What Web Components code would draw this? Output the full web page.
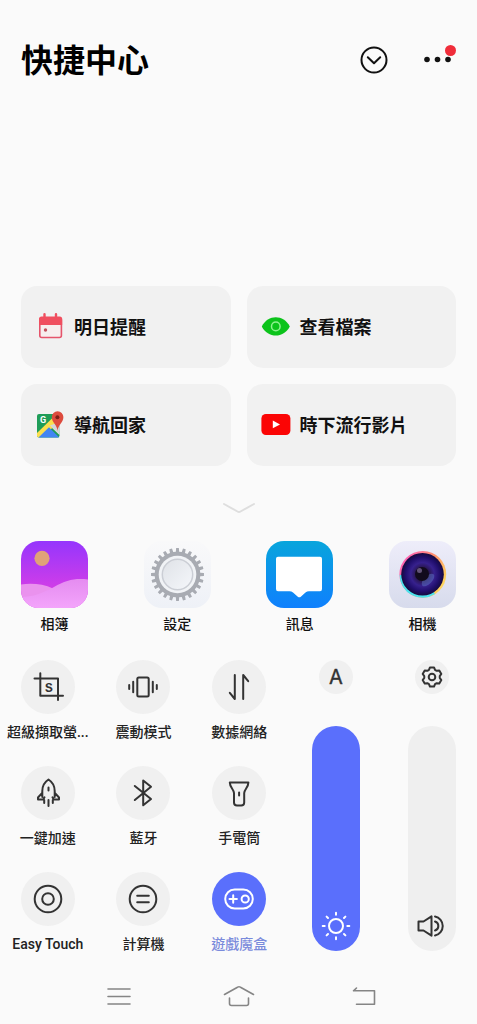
<!DOCTYPE html>
<html lang="zh-Hant">
<head>
<meta charset="utf-8">
<meta name="viewport" content="width=device-width, initial-scale=1">
<title>快捷中心</title>
<style>
body {
    margin: 0;
    background: #fafafa;
    color: #111111;
    font-family: Roboto, "Noto Sans CJK TC", sans-serif;
}
</style>
</head>
<body>
<shortcut-center></shortcut-center>

<script>
/**
 * Outline of a gear, centred on (cx, cy).
 *
 * @param {number} teeth - Number of teeth.
 * @param {number} outer - Radius at the tip of a tooth.
 * @param {number} inner - Radius between two teeth.
 * @param {number} tip - Half width of a tip, as a share of one tooth's angle.
 * @param {number} base - Half width of a tooth's base, as a share of its angle.
 */
function gearPath(cx, cy, teeth, outer, inner, tip, base) {
    const step = Math.PI * 2 / teeth;
    const points = [];
    for (let i = 0; i < teeth; i++) {
        const mid = i * step - Math.PI / 2;
        for (const [r, a] of [[inner, -base], [outer, -tip], [outer, tip], [inner, base]]) {
            const angle = mid + a * step;
            points.push((cx + r * Math.cos(angle)).toFixed(2) + " " + (cy + r * Math.sin(angle)).toFixed(2));
        }
    }
    return "M" + points.join("L") + "Z";
}

function rays(cx, cy, from, to) {
    let d = "";
    for (let i = 0; i < 8; i++) {
        const c = Math.cos(i * Math.PI / 4);
        const s = Math.sin(i * Math.PI / 4);
        d += `M${(cx + from * c).toFixed(1)} ${(cy + from * s).toFixed(1)}L${(cx + to * c).toFixed(1)} ${(cy + to * s).toFixed(1)}`;
    }
    return d;
}

// Line icons use a 30 unit box and take their stroke from the text colour.
const ICONS = {
    expand: `<circle cx="15" cy="15" r="12.5"/><path d="M8.8 12.3L15 18.3L21.2 12.3"/>`,
    more: `<g fill="currentColor" stroke="none"><circle cx="4" cy="14.5" r="2.8"/><circle cx="14.5" cy="14.5" r="2.8"/><circle cx="25" cy="14.5" r="2.8"/></g>`,
    capture: `<path d="M1.5 6.5H25V28M7.3 1.3V23.7H30"/><text x="15.8" y="19.5" text-anchor="middle" font-family="Liberation Mono" font-size="13" font-weight="bold" fill="currentColor" stroke="none">S</text>`,
    vibrate: `<rect x="9.3" y="5.5" width="11.4" height="19" rx="1.5"/><path d="M5.2 9.8V20.2M1.2 13V17M24.8 9.8V20.2M28.8 13V17"/>`,
    data: `<path d="M10.8 3V27L5.8 20.8M19.2 27V3L24.2 9.2"/>`,
    rocket: `<path d="M9.3 19V13C9.3 8 12 3.8 15.5 1.5C19 3.8 21.7 8 21.7 13V19M9.2 14.8L5 19.5V21.5H10.2L11.5 19.3M21.8 14.8L26 19.5V21.5H20.8L19.5 19.3M15.5 9.5V12.5M15.5 22V28M11.2 22V25M19.8 22V25"/>`,
    bluetooth: `<path d="M6.8 8L23 21L15.2 27.3V2.5L23 8.8L6.8 22"/>`,
    torch: `<path d="M5.8 4.5H24.4C24.4 9.5 20.2 11.5 20.2 15V24.5Q20.2 27.5 17.2 27.5H13Q10 27.5 10 24.5V15C10 11.5 5.8 9.5 5.8 4.5ZM15.1 14.5V17.5"/>`,
    touch: `<circle cx="15" cy="15" r="13.3"/><circle cx="15" cy="15" r="5.8"/>`,
    calc: `<circle cx="15" cy="15" r="13.3"/><path d="M9.2 11.7H20.8M9.2 18.3H20.8"/>`,
    gamepad: `<rect x="1.2" y="5.5" width="27.6" height="19" rx="9.5"/><path d="M9.2 11.3V18.7M5.5 15H12.9"/><circle cx="21.2" cy="15" r="3.6"/>`,
    gear: `<path d="${gearPath(15, 15, 6, 9.8, 7.8, 0.2, 0.38)}"/><circle cx="15" cy="15" r="3.3"/>`,
    auto: `<text x="15" y="22" text-anchor="middle" font-family="Inter" font-size="20" font-weight="400" fill="currentColor" stroke="currentColor" stroke-width="0.4">A</text>`,
    sun: `<circle cx="15" cy="15" r="7"/><path d="${rays(15, 15, 11.3, 13.3)}"/>`,
    speaker: `<path d="M1.5 10.5H6.5L14.5 5.3V24.7L6.5 19.5H1.5ZM18 5.5A9.7 9.7 0 0 1 18 24.5M18 10.5A4.7 4.7 0 0 1 18 19.5"/>`,
    menu: `<path d="M4 8H26M4 15.5H26M4 23H26"/>`,
    home: `<path d="M1.5 13.5L14.5 6.2Q16 5.2 17.5 6.2L30.5 13.5M6.5 17V22.5Q6.5 24.5 8.5 24.5H23.5Q25.5 24.5 25.5 22.5V17"/>`,
    back: `<path d="M13.5 7L10.5 9.8H31.5V23.2H13.5"/>`,
    chevron: `<path d="M0 10L13.5 17.5Q15 18.5 16.5 17.5L30 10"/>`,
    calendar: `<g stroke="none"><rect x="4.8" y="6" width="21.6" height="19.5" rx="2" fill="#f7eeee" stroke="#e5546b" stroke-width="1.6"/><path d="M4 13V7Q4 4.5 6.5 4.5H24.7Q27.2 4.5 27.2 7V13Z" fill="#f04f5f"/><path d="M9.5 2.2V6M21 2.2V6" stroke="#f04f5f" stroke-width="2.4"/><circle cx="10.5" cy="18" r="1.7" fill="#c2505c"/></g>`,
    eye: `<path d="M0.8 14.4C7 2.2 22.5 2.2 28.8 14.4C22.5 26.6 7 26.6 0.8 14.4Z" fill="#0cc31b" stroke="none"/><circle cx="14.8" cy="14.4" r="4.3" stroke="#8df28f" stroke-width="1.5"/>`,
    maps: `<g stroke="none"><rect x="2" y="4" width="22.5" height="23.5" rx="2" fill="#1f9d58"/><path d="M24.5 12V25L14 15Z" fill="#e3e5e8"/><path d="M2 23L19 6.5L24.5 8V13L4 27.5Q2 27.5 2 25.5Z" fill="#fbdf4e"/><path d="M3.5 27.5L14 17.2L24.3 27.5Z" fill="#4285f4"/><path d="M15 15.5L24.5 24.5V12Z" fill="#d5d7da"/><text x="8" y="13.2" text-anchor="middle" font-family="Roboto" font-size="9" font-weight="bold" fill="#ffffff">G</text><path d="M22.6 21C22.2 14.5 16.8 13 16.8 7A5.8 5.8 0 0 1 28.4 7C28.4 13 23 14.5 22.6 21Z" fill="#dd4b3e"/><circle cx="22.4" cy="7.2" r="2" fill="#7d1f17"/></g>`,
    video: `<rect x="0.4" y="4" width="29" height="21" rx="4.5" fill="#fb0505" stroke="none"/><path d="M11.8 10.6L19 14.4L11.8 18.2Z" fill="#ffffff" stroke="none"/>`
};

// App icons fill a 67 unit box.
const APP_ICONS = {
    photos: `
<linearGradient id="sky" x2="0" y2="1"><stop stop-color="#9536fd"/><stop offset="0.7" stop-color="#d03de8"/></linearGradient>
<linearGradient id="hill" x2="0" y2="1"><stop stop-color="#e58cf0"/><stop offset="1" stop-color="#f3a4fb"/></linearGradient>
<rect width="67" height="67" fill="url(#sky)"/>
<circle cx="21" cy="17.3" r="7.6" fill="#e0a279"/>
<path d="M0 43.5C11 42 22 43 32 47.5L67 60V67H0Z" fill="#ea92ee"/>
<path d="M0 56C12 56 22 52 33 46C45 39 54 37 67 38.5V67H0Z" fill="url(#hill)"/>`,
    settings: `
<linearGradient id="plate" x2="0" y2="1"><stop stop-color="#f9f9fa"/><stop offset="1" stop-color="#eef1f7"/></linearGradient>
<linearGradient id="knob" x2="1" y2="1"><stop stop-color="#dfe2e7"/><stop offset="1" stop-color="#f5f7fb"/></linearGradient>
<rect width="67" height="67" fill="url(#plate)"/>
<path d="${gearPath(33.5, 33.5, 24, 26.5, 22.8, 0.2, 0.28)}" fill="#a8abb2"/>
<circle cx="33.5" cy="33.5" r="18.8" fill="#f1f3f6"/>
<circle cx="33.5" cy="33.5" r="15.2" fill="url(#knob)" stroke="#cbced5" stroke-width="1.5"/>`,
    messages: `
<linearGradient id="sea" x2="0" y2="1"><stop stop-color="#08a5dc"/><stop offset="1" stop-color="#0f80fd"/></linearGradient>
<rect width="67" height="67" fill="url(#sea)"/>
<path d="M12 15.7H54Q56 15.7 56 17.7V48Q56 50.2 54 50.2H43Q41 50.2 39.5 51.5L34.8 55.7Q33.3 57 31.8 55.7L27 51.5Q25.5 50.2 23.5 50.2H12Q10 50.2 10 48V17.7Q10 15.7 12 15.7Z" fill="#ffffff"/>`,
    camera: `
<linearGradient id="case" x2="0" y2="1"><stop stop-color="#eeedfa"/><stop offset="1" stop-color="#d7dbec"/></linearGradient>
<linearGradient id="rim" x1="0" y1="0.2" x2="1" y2="0.8"><stop stop-color="#ff5bc0"/><stop offset="0.5" stop-color="#ff8f6b"/><stop offset="1" stop-color="#ffe45c"/></linearGradient>
<radialGradient id="lens"><stop stop-color="#09060f"/><stop offset="0.25" stop-color="#24133f"/><stop offset="0.55" stop-color="#37218e"/><stop offset="0.8" stop-color="#200e6c"/><stop offset="1" stop-color="#150a3e"/></radialGradient>
<rect width="67" height="67" fill="url(#case)"/>
<circle cx="33.8" cy="33.3" r="23.4" fill="url(#rim)"/>
<path d="M10.6 34A22.9 22.9 0 0 0 46 53L33 33Z" fill="#4de3ee"/>
<circle cx="33.5" cy="33.3" r="21.3" fill="url(#lens)"/>
<ellipse cx="39" cy="39" rx="8" ry="4" transform="rotate(-45 39 39)" fill="#5c73c4" opacity="0.5"/>
<circle cx="33" cy="33" r="7" fill="#120b1d"/>
<circle cx="30.5" cy="29.5" r="2.5" fill="#77658f" opacity="0.8"/>`
};

class LineIcon extends HTMLElement {
    constructor() {
        super();
        this.attachShadow({ mode: "open" });
    }

    connectedCallback() {
        this.shadowRoot.innerHTML =
`
<style>
:host {
    display: block;
    flex: none;
    width: 30px;
    height: 30px;
}

svg {
    display: block;
    width: 100%;
    height: 100%;
    overflow: visible;
    fill: none;
    stroke: currentColor;
    stroke-width: var(--icon-stroke, 2);
    stroke-linecap: round;
    stroke-linejoin: round;
}
</style>
<svg viewBox="0 0 30 30" aria-hidden="true">${ICONS[this.getAttribute("name")]}</svg>
`;
    }
}

class CenterHeader extends HTMLElement {
    constructor() {
        super();
        this.attachShadow({ mode: "open" }).innerHTML =
`
<style>
:host {
    display: flex;
    align-items: center;
    gap: 34px;
    padding: 36px 24px 0 21px;
}

h1 {
    flex: 1;
    margin: 0;
    padding-top: 2px;
    font-size: 32px;
    line-height: 46px;
    font-weight: 700;
    color: #000000;
}

button {
    position: relative;
    padding: 0;
    border: 0;
    background: none;
    color: #111111;
}

.badge {
    position: absolute;
    top: 0;
    right: -3px;
    width: 11px;
    height: 11px;
    border-radius: 50%;
    background: #f02d3a;
}
</style>
<h1><slot></slot></h1>
<button type="button" aria-label="展開"><line-icon name="expand"></line-icon></button>
<button type="button" aria-label="更多"><line-icon name="more"></line-icon><span class="badge"></span></button>
`;
    }
}

class ShortcutCard extends HTMLElement {
    constructor() {
        super();
        this.attachShadow({ mode: "open" });
    }

    connectedCallback() {
        this.shadowRoot.innerHTML =
`
<style>
:host {
    display: block;
}

button {
    display: flex;
    align-items: center;
    gap: 9px;
    width: 100%;
    height: 82px;
    padding: 0 14px;
    border: 0;
    border-radius: 16px;
    background: #f1f1f1;
    color: #111111;
    font: 700 18px/24px Roboto, "Noto Sans CJK TC", sans-serif;
}

.label {
    padding-top: 2px;
}
</style>
<button type="button"><line-icon name="${this.getAttribute("icon")}"></line-icon><span class="label"><slot></slot></span></button>
`;
    }
}

class AppLauncher extends HTMLElement {
    constructor() {
        super();
        this.attachShadow({ mode: "open" });
    }

    connectedCallback() {
        this.shadowRoot.innerHTML =
`
<style>
:host {
    display: block;
}

button {
    display: flex;
    flex-direction: column;
    align-items: center;
    gap: 6px;
    padding: 0;
    border: 0;
    background: none;
    color: #111111;
    font: 500 14px/20px Roboto, "Noto Sans CJK TC", sans-serif;
}

svg {
    display: block;
    width: 67px;
    height: 67px;
    border-radius: 18px;
}
</style>
<button type="button">
    <svg viewBox="0 0 67 67" aria-hidden="true">${APP_ICONS[this.getAttribute("icon")]}</svg>
    <span><slot></slot></span>
</button>
`;
    }
}

class QuickToggle extends HTMLElement {
    constructor() {
        super();
        this.attachShadow({ mode: "open" });
    }

    connectedCallback() {
        this.shadowRoot.innerHTML =
`
<style>
:host {
    display: block;
    --disc: #f0f0f0;
    --ink: #333333;
    --label: #222222;
}

:host([active]) {
    --disc: #5a6ffc;
    --ink: #ffffff;
    --label: #7a8bdc;
}

button {
    display: flex;
    flex-direction: column;
    align-items: center;
    gap: 8px;
    width: 100%;
    padding: 0;
    border: 0;
    background: none;
    color: var(--label);
    font: 500 14px/20px Roboto, "Noto Sans CJK TC", sans-serif;
    white-space: nowrap;
}

.disc {
    padding: 12px;
    border-radius: 50%;
    background: var(--disc);
    color: var(--ink);
}
</style>
<button type="button" aria-pressed="${this.hasAttribute("active")}">
    <span class="disc"><line-icon name="${this.getAttribute("icon")}"></line-icon></span>
    <span><slot></slot></span>
</button>
`;
    }
}

class LevelSlider extends HTMLElement {
    constructor() {
        super();
        this.attachShadow({ mode: "open" });
    }

    connectedCallback() {
        this.shadowRoot.innerHTML =
`
<style>
:host {
    display: flex;
    flex-direction: column;
    align-items: center;
    gap: 32px;
    width: 48px;
    color: #333333;
}

button {
    padding: 2px;
    border: 0;
    border-radius: 50%;
    background: #f0f0f0;
    color: inherit;
}

.bar {
    position: relative;
    display: flex;
    flex: 1;
}

input {
    appearance: none;
    writing-mode: vertical-lr;
    direction: rtl;
    width: 48px;
    height: auto;
    margin: 0;
    border-radius: 24px;
    background: linear-gradient(to top, #5a6ffc var(--level), #efefef var(--level));
}

input::-webkit-slider-thumb {
    appearance: none;
    width: 48px;
    height: 1px;
}

.bar line-icon {
    position: absolute;
    left: 9px;
    bottom: 10px;
    pointer-events: none;
}

:host([light]) .bar line-icon {
    color: #ffffff;
}
</style>
<button type="button" aria-label="${this.getAttribute("action")}"><line-icon name="${this.getAttribute("button-icon")}"></line-icon></button>
<div class="bar">
    <input type="range" min="0" max="100" value="${this.getAttribute("value")}" aria-label="${this.getAttribute("label")}">
    <line-icon name="${this.getAttribute("icon")}"></line-icon>
</div>
`;
        const input = this.shadowRoot.querySelector("input");
        const update = () => input.style.setProperty("--level", input.value + "%");
        input.addEventListener("input", update);
        update();
    }
}

class SystemNav extends HTMLElement {
    constructor() {
        super();
        this.attachShadow({ mode: "open" }).innerHTML =
`
<style>
:host {
    display: block;
    --icon-stroke: 1.6;
}

nav {
    display: grid;
    grid-template-columns: repeat(3, 1fr);
    justify-items: center;
    padding: 0 59px;
}

button {
    padding: 0;
    border: 0;
    background: none;
    color: #858585;
}
</style>
<nav>
    <button type="button" aria-label="最近"><line-icon name="menu"></line-icon></button>
    <button type="button" aria-label="主頁"><line-icon name="home"></line-icon></button>
    <button type="button" aria-label="返回"><line-icon name="back"></line-icon></button>
</nav>
`;
    }
}

class ShortcutCenter extends HTMLElement {
    constructor() {
        super();
        this.attachShadow({ mode: "open" }).innerHTML =
`
<style>
:host {
    display: block;
    padding-bottom: 12px;
}

.cards {
    display: grid;
    grid-template-columns: 1fr 1fr;
    gap: 16px;
    padding: 202px 21px 0;
}

.fold {
    display: block;
    margin: 28px auto 17px;
    padding: 0;
    border: 0;
    background: none;
    color: #dedede;
}

.apps {
    display: flex;
    justify-content: space-between;
    padding: 0 21px;
}

.controls {
    display: flex;
    padding: 26px 21px 27px 0;
}

.toggles {
    flex: 1;
    display: grid;
    grid-template-columns: repeat(3, minmax(0, 1fr));
    gap: 24px 0;
}

.sliders {
    display: flex;
    gap: 48px;
    padding: 0 0 3px 25px;
}
</style>
<center-header>快捷中心</center-header>
<section class="cards">
    <shortcut-card icon="calendar">明日提醒</shortcut-card>
    <shortcut-card icon="eye">查看檔案</shortcut-card>
    <shortcut-card icon="maps">導航回家</shortcut-card>
    <shortcut-card icon="video">時下流行影片</shortcut-card>
</section>
<button class="fold" type="button" aria-label="收合"><line-icon name="chevron"></line-icon></button>
<section class="apps">
    <app-launcher icon="photos">相簿</app-launcher>
    <app-launcher icon="settings">設定</app-launcher>
    <app-launcher icon="messages">訊息</app-launcher>
    <app-launcher icon="camera">相機</app-launcher>
</section>
<section class="controls">
    <div class="toggles">
        <quick-toggle icon="capture">超級擷取螢...</quick-toggle>
        <quick-toggle icon="vibrate">震動模式</quick-toggle>
        <quick-toggle icon="data">數據網絡</quick-toggle>
        <quick-toggle icon="rocket">一鍵加速</quick-toggle>
        <quick-toggle icon="bluetooth">藍牙</quick-toggle>
        <quick-toggle icon="torch">手電筒</quick-toggle>
        <quick-toggle icon="touch">Easy Touch</quick-toggle>
        <quick-toggle icon="calc">計算機</quick-toggle>
        <quick-toggle icon="gamepad" active>遊戲魔盒</quick-toggle>
    </div>
    <div class="sliders">
        <level-slider light icon="sun" label="亮度" value="100" button-icon="auto" action="自動亮度"></level-slider>
        <level-slider icon="speaker" label="音量" value="0" button-icon="gear" action="音量設定"></level-slider>
    </div>
</section>
<system-nav></system-nav>
`;
    }
}

window.customElements.define("line-icon", LineIcon);
window.customElements.define("center-header", CenterHeader);
window.customElements.define("shortcut-card", ShortcutCard);
window.customElements.define("app-launcher", AppLauncher);
window.customElements.define("quick-toggle", QuickToggle);
window.customElements.define("level-slider", LevelSlider);
window.customElements.define("system-nav", SystemNav);
window.customElements.define("shortcut-center", ShortcutCenter);
</script>
</body>
</html>
